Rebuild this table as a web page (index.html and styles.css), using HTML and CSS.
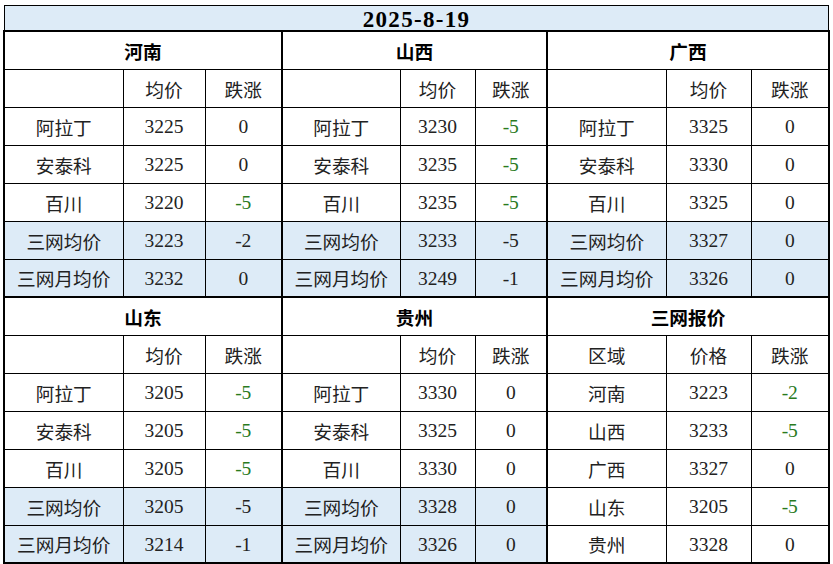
FILE: index.html
```html
<!DOCTYPE html>
<html lang="zh-CN">
<head>
<meta charset="utf-8">
<title>2025-8-19</title>
<link rel="stylesheet" href="styles.css">
</head>
<body>
<div class="sheet">
  <div class="title">2025-8-19</div>
  <table class="grid">
    <colgroup>
      <col class="c-name"><col class="c-p1"><col class="c-d1">
      <col class="c-name2"><col class="c-p2"><col class="c-d2">
      <col class="c-name3"><col class="c-p3"><col class="c-d3">
    </colgroup>
    <tbody>
      <tr class="head">
        <th colspan="3" class="sec">河南</th>
        <th colspan="3" class="sec">山西</th>
        <th colspan="3" class="sec">广西</th>
      </tr>
      <tr class="sub">
        <td></td><td>均价</td><td class="end">跌涨</td>
        <td></td><td>均价</td><td class="end">跌涨</td>
        <td></td><td>均价</td><td>跌涨</td>
      </tr>
      <tr>
        <td>阿拉丁</td><td>3225</td><td class="end">0</td>
        <td>阿拉丁</td><td>3230</td><td class="end neg">-5</td>
        <td>阿拉丁</td><td>3325</td><td>0</td>
      </tr>
      <tr>
        <td>安泰科</td><td>3225</td><td class="end">0</td>
        <td>安泰科</td><td>3235</td><td class="end neg">-5</td>
        <td>安泰科</td><td>3330</td><td>0</td>
      </tr>
      <tr>
        <td>百川</td><td>3220</td><td class="end neg">-5</td>
        <td>百川</td><td>3235</td><td class="end neg">-5</td>
        <td>百川</td><td>3325</td><td>0</td>
      </tr>
      <tr class="avg">
        <td>三网均价</td><td>3223</td><td class="end">-2</td>
        <td>三网均价</td><td>3233</td><td class="end">-5</td>
        <td>三网均价</td><td>3327</td><td>0</td>
      </tr>
      <tr class="avg">
        <td>三网月均价</td><td>3232</td><td class="end">0</td>
        <td>三网月均价</td><td>3249</td><td class="end">-1</td>
        <td>三网月均价</td><td>3326</td><td>0</td>
      </tr>
      <tr class="head">
        <th colspan="3" class="sec">山东</th>
        <th colspan="3" class="sec">贵州</th>
        <th colspan="3" class="sec">三网报价</th>
      </tr>
      <tr class="sub">
        <td></td><td>均价</td><td class="end">跌涨</td>
        <td></td><td>均价</td><td class="end">跌涨</td>
        <td>区域</td><td>价格</td><td>跌涨</td>
      </tr>
      <tr>
        <td>阿拉丁</td><td>3205</td><td class="end neg">-5</td>
        <td>阿拉丁</td><td>3330</td><td class="end">0</td>
        <td>河南</td><td>3223</td><td class="neg">-2</td>
      </tr>
      <tr>
        <td>安泰科</td><td>3205</td><td class="end neg">-5</td>
        <td>安泰科</td><td>3325</td><td class="end">0</td>
        <td>山西</td><td>3233</td><td class="neg">-5</td>
      </tr>
      <tr>
        <td>百川</td><td>3205</td><td class="end neg">-5</td>
        <td>百川</td><td>3330</td><td class="end">0</td>
        <td>广西</td><td>3327</td><td>0</td>
      </tr>
      <tr class="avg2">
        <td class="b">三网均价</td><td class="b">3205</td><td class="b end">-5</td>
        <td class="b">三网均价</td><td class="b">3328</td><td class="b end">0</td>
        <td>山东</td><td>3205</td><td class="neg">-5</td>
      </tr>
      <tr class="avg2">
        <td class="b">三网月均价</td><td class="b">3214</td><td class="b end">-1</td>
        <td class="b">三网月均价</td><td class="b">3326</td><td class="b end">0</td>
        <td>贵州</td><td>3328</td><td>0</td>
      </tr>
    </tbody>
  </table>
</div>
</body>
</html>
```
FILE: styles.css
```css
html, body {
  margin: 0;
  padding: 0;
  background: #ffffff;
}

.sheet {
  padding: 5px 0 0 3px;
  width: 830px;
}

.title {
  margin-left: 1px;
  width: 823px;
  height: 24px;
  border: 1px solid #000;
  border-bottom: none;
  background: #ddebf7;
  text-align: center;
  font-family: "Liberation Serif", serif;
  font-weight: bold;
  font-size: 23px;
  line-height: 27px;
  color: #000;
  letter-spacing: 1.3px;
}

.grid {
  border-collapse: collapse;
  table-layout: fixed;
  width: 827px;
  border: 2px solid #000;
  font-family: "Liberation Serif", "Noto Sans CJK SC", serif;
  font-size: 18.7px;
  color: #111;
}

.c-name { width: 119px; }
.c-p1 { width: 82px; }
.c-d1 { width: 77px; }
.c-name2 { width: 118px; }
.c-p2 { width: 75px; }
.c-d2 { width: 72px; }
.c-name3 { width: 119px; }
.c-p3 { width: 85px; }
.c-d3 { width: 78px; }

.grid tr {
  height: 38px;
}

.grid td, .grid th {
  border: 1px solid #000;
  padding: 0;
  text-align: center;
  vertical-align: middle;
  white-space: nowrap;
  overflow: hidden;
}

.grid td {
  font-weight: normal;
  color: #222;
}

.grid td:nth-child(3n+2),
.grid td:nth-child(3n) {
  font-size: 19.5px;
  padding-top: 2px;
}

.grid .sub td:nth-child(3n+2),
.grid .sub td:nth-child(3n) {
  font-size: 18.7px;
  padding-top: 0;
}

.grid th.sec {
  font-family: "Noto Sans CJK SC", serif;
  font-weight: bold;
  font-size: 18.7px;
  color: #000;
  border-right: 2px solid #000;
}

.grid .head th {
  border-top: 2px solid #000;
}

.grid td.end {
  border-right: 2px solid #000;
}

.grid .neg {
  color: #2a7a1e;
}

.grid .avg td {
  background: #ddebf7;
}

.grid .avg2 td.b {
  background: #ddebf7;
}
```
